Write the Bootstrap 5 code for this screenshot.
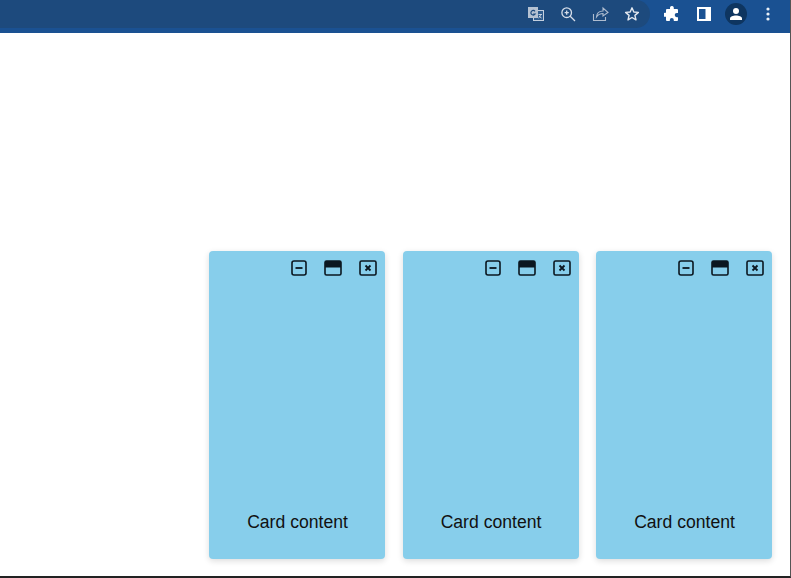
<!DOCTYPE html>
<html lang="en">
<head>
<meta charset="utf-8">
<title>Cards</title>
<link href="https://cdn.jsdelivr.net/npm/bootstrap@5.3.0/dist/css/bootstrap.min.css" rel="stylesheet">
<style>
html,body{height:100%;margin:0;overflow:hidden;background:#fff}
.frame{height:578px;width:791px;border-right:1px solid #555;border-bottom:2px solid #222;box-sizing:border-box;display:flex;flex-direction:column}
.chrome{height:33px;flex:none;background:#1a5192;padding-right:12px}
.pill{height:28px;background:#1d4a7d;border-radius:0 14px 14px 0;padding-right:8px;margin-right:12px;gap:12px}
.tb{width:20px;height:20px;flex:none;display:flex;align-items:center;justify-content:center}
.tray{height:28px;gap:12px}
.avatar{width:22px;height:22px;margin:0 -1px;border-radius:50%;background:#0e3560;display:flex;align-items:center;justify-content:center}
.stage{flex:1;padding:218px 18px 0 0;gap:17.5px}
.tile{width:176px;height:308px;background:#87ceeb;border-radius:4px;box-shadow:0 2px 6px rgba(0,0,0,.14);flex:none}
.tile-tools{padding:9px 8px 0 0;height:34px;gap:17px}
.tool{display:block;flex:none}
.tile-text{font-family:"Liberation Sans",Arial,sans-serif;font-size:17.6px;line-height:22px;color:#111;padding-bottom:26px;padding-left:1px;text-align:center}
</style>
</head>
<body>
<div class="frame">
  <div class="chrome d-flex align-items-start">
    <div class="pill flex-grow-1 d-flex justify-content-end align-items-center">
      <span class="tb"><svg width="16" height="16" viewBox="0 0 16 16"><rect x="5.500" y="4.500" width="10" height="10" fill="#2f5c8e" stroke="#c3cfde" stroke-width="1"/><rect x="0" y="1" width="10" height="11" fill="#b5c2d2"/><path d="M7 5.300A2.300 2.300 0 1 0 7 8.200H5.200" fill="none" stroke="#1d4a7d" stroke-width="1.200"/><path d="M10.500 8.500h3.500M12.500 8.500c0 1.500-1 3-2 3.500M11 10c.7 1 1.600 1.600 2.500 2" fill="none" stroke="#d3dce8" stroke-width=".9"/></svg></span>
      <span class="tb"><svg width="16" height="16" viewBox="0 0 16 16" fill="none" stroke="#d6deea" stroke-width="1.300"><circle cx="6.700" cy="6.700" r="4.800"/><path d="M10.200 10.200 15 15M4.600 6.700h4.200M6.700 4.600v4.200"/></svg></span>
      <span class="tb"><svg width="17" height="16" viewBox="0 0 17 16" fill="none" stroke="#aebccf" stroke-width="1.100"><path d="M1.500 8v6.500h12V11"/><path d="M4.500 11c.3-4 3-6 6.500-6V2l5 4.500L11 10V7.500C8 7.500 6 8.800 4.500 11z"/></svg></span>
      <span class="tb"><svg width="16" height="16" viewBox="0 0 16 16" fill="none" stroke="#e3e8f0" stroke-width="1.400" stroke-linejoin="round"><path d="M8 1.800 9.800 6l4.600.4-3.500 3 1.100 4.500L8 11.500 4 13.900l1.100-4.500-3.500-3L6.200 6z"/></svg></span>
    </div>
    <div class="tray d-flex align-items-center">
      <span class="tb"><svg width="16" height="16" viewBox="0 0 16 16" fill="#fff"><path d="M6 1.500a2 2 0 0 1 3.800 0V3h3.200a1 1 0 0 1 1 1v3h-1.200a2.100 2.100 0 0 0 0 4.200H14V14a1 1 0 0 1-1 1H9.800v-1a2 2 0 0 0-4 0v1H3a1 1 0 0 1-1-1v-3.200H1a2 2 0 0 1 0-4h1V4a1 1 0 0 1 1-1h3z"/></svg></span>
      <span class="tb"><svg width="14" height="14" viewBox="0 0 14 14"><path fill="#fff" d="M0 0h14v14H0z"/><path fill="#1a5192" d="M2 2h6.500v10H2z"/></svg></span>
      <span class="avatar"><svg width="14" height="14" viewBox="0 0 14 14" fill="#fff"><circle cx="7" cy="4" r="3"/><path d="M1 13v-1.500C1 9.500 4 8.500 7 8.500s6 1 6 3V13z"/></svg></span>
      <span class="tb"><svg width="4" height="14" viewBox="0 0 4 14" fill="#eaf0f7"><circle cx="2" cy="2" r="1.600"/><circle cx="2" cy="7" r="1.600"/><circle cx="2" cy="12" r="1.600"/></svg></span>
    </div>
  </div>
  <div class="stage d-flex justify-content-end align-items-start">
    <div class="tile d-flex flex-column justify-content-between">
      <div class="tile-tools d-flex justify-content-end align-items-start">
        <svg class="tool" width="16" height="16" viewBox="0 0 16 16"><rect x="1" y="1" width="14" height="14" rx="2" fill="none" stroke="#0b1720" stroke-width="1.600"/><path d="M4.500 8h7" stroke="#0b1720" stroke-width="1.800"/></svg>
        <svg class="tool" width="18" height="16" viewBox="0 0 18 16"><rect x="1" y="1" width="16" height="14" rx="1.500" fill="none" stroke="#0b1720" stroke-width="1.600"/><rect x="1" y="1" width="16" height="6.500" fill="#0b1720"/></svg>
        <svg class="tool" width="18" height="16" viewBox="0 0 18 16"><rect x="1" y="1" width="16" height="14" rx="1.500" fill="none" stroke="#0b1720" stroke-width="1.600"/><path d="M6.500 5.500l5 5M11.500 5.500l-5 5" stroke="#0b1720" stroke-width="1.800"/></svg>
      </div>
      <div class="tile-text">Card content</div>
    </div>
    <div class="tile d-flex flex-column justify-content-between">
      <div class="tile-tools d-flex justify-content-end align-items-start">
        <svg class="tool" width="16" height="16" viewBox="0 0 16 16"><rect x="1" y="1" width="14" height="14" rx="2" fill="none" stroke="#0b1720" stroke-width="1.600"/><path d="M4.500 8h7" stroke="#0b1720" stroke-width="1.800"/></svg>
        <svg class="tool" width="18" height="16" viewBox="0 0 18 16"><rect x="1" y="1" width="16" height="14" rx="1.500" fill="none" stroke="#0b1720" stroke-width="1.600"/><rect x="1" y="1" width="16" height="6.500" fill="#0b1720"/></svg>
        <svg class="tool" width="18" height="16" viewBox="0 0 18 16"><rect x="1" y="1" width="16" height="14" rx="1.500" fill="none" stroke="#0b1720" stroke-width="1.600"/><path d="M6.500 5.500l5 5M11.500 5.500l-5 5" stroke="#0b1720" stroke-width="1.800"/></svg>
      </div>
      <div class="tile-text">Card content</div>
    </div>
    <div class="tile d-flex flex-column justify-content-between">
      <div class="tile-tools d-flex justify-content-end align-items-start">
        <svg class="tool" width="16" height="16" viewBox="0 0 16 16"><rect x="1" y="1" width="14" height="14" rx="2" fill="none" stroke="#0b1720" stroke-width="1.600"/><path d="M4.500 8h7" stroke="#0b1720" stroke-width="1.800"/></svg>
        <svg class="tool" width="18" height="16" viewBox="0 0 18 16"><rect x="1" y="1" width="16" height="14" rx="1.500" fill="none" stroke="#0b1720" stroke-width="1.600"/><rect x="1" y="1" width="16" height="6.500" fill="#0b1720"/></svg>
        <svg class="tool" width="18" height="16" viewBox="0 0 18 16"><rect x="1" y="1" width="16" height="14" rx="1.500" fill="none" stroke="#0b1720" stroke-width="1.600"/><path d="M6.500 5.500l5 5M11.500 5.500l-5 5" stroke="#0b1720" stroke-width="1.800"/></svg>
      </div>
      <div class="tile-text">Card content</div>
    </div>
  </div>
</div>
<script src="https://cdn.jsdelivr.net/npm/bootstrap@5.3.0/dist/js/bootstrap.bundle.min.js"></script>
</body>
</html>
